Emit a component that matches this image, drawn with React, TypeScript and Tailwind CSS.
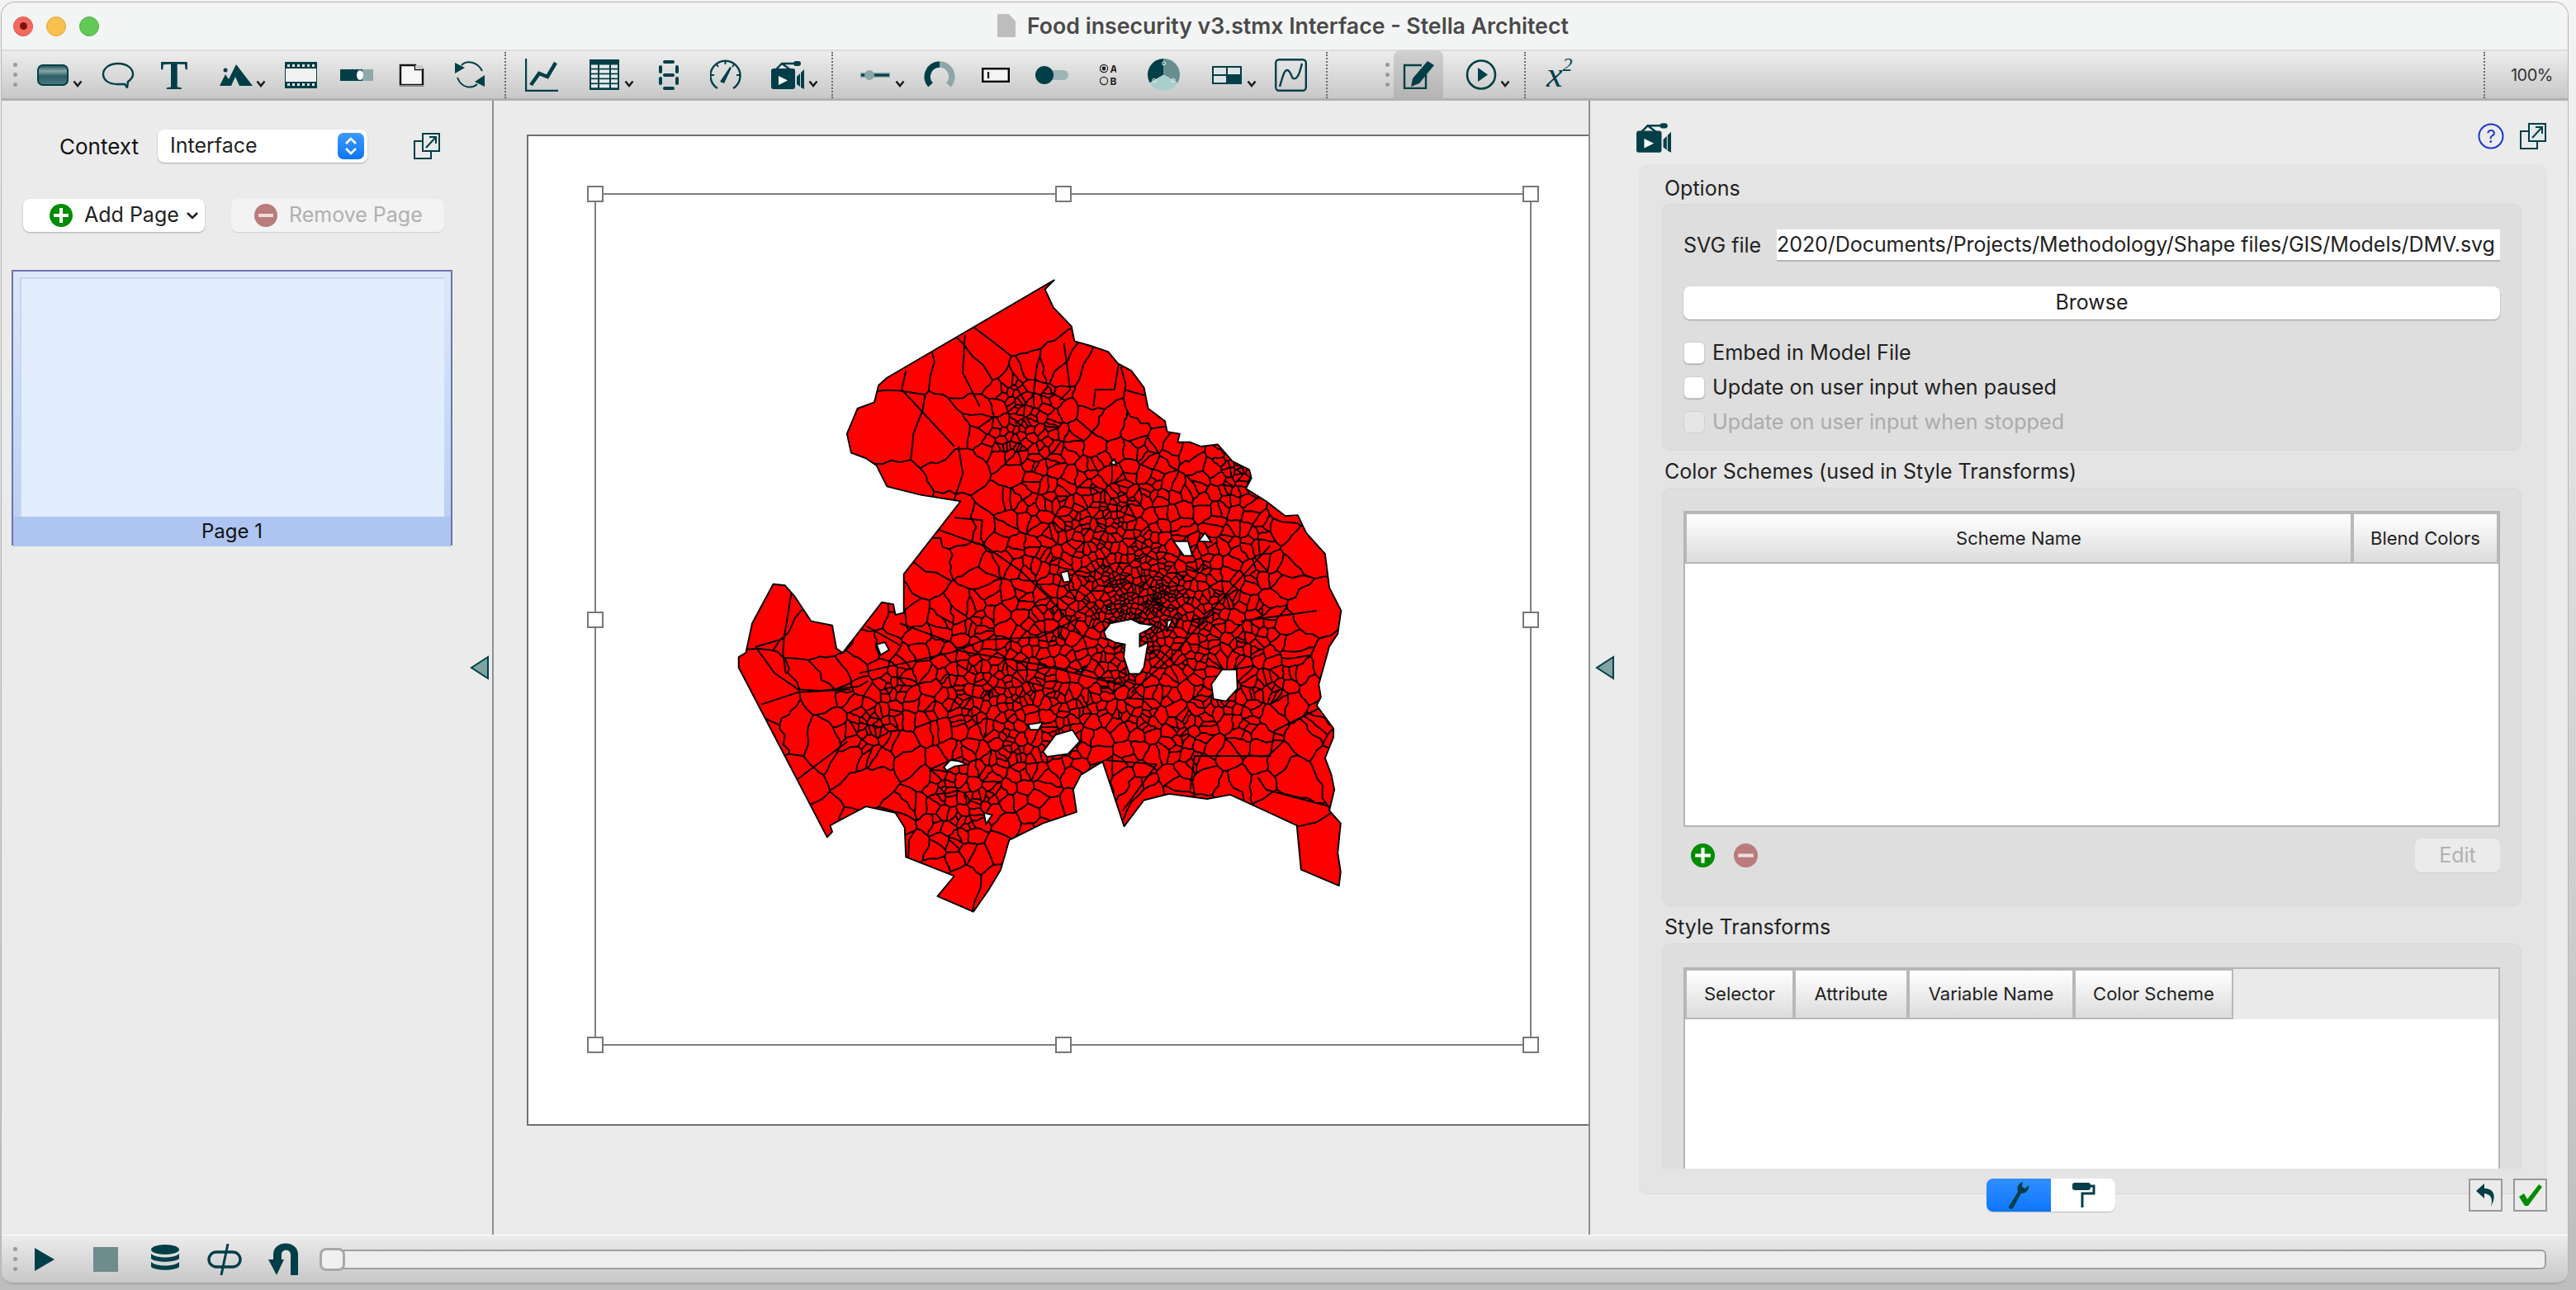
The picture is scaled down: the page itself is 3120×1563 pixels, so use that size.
import React from "react";

const TEAL = "#003f47";

// ---- map data: outline traced from the svg, inner tracts generated as a voronoi net
const OUTLINE = "817,40 795,62 815,105 858,150 865,185 900,195 945,210 968,238 1000,255 1030,295 1040,345 1080,375 1085,400 1115,405 1110,425 1140,425 1165,435 1205,430 1240,470 1280,490 1285,510 1272,535 1320,565 1365,600 1395,598 1415,640 1460,690 1470,770 1498,825 1490,880 1470,910 1445,1000 1450,1030 1440,1050 1480,1105 1480,1125 1460,1175 1475,1215 1482,1250 1470,1300 1497,1330 1490,1400 1497,1445 1493,1478 1403,1440 1393,1335 1235,1262 1180,1272 1090,1260 1030,1275 983,1337 932,1183 880,1215 862,1250 870,1303 790,1330 710,1370 690,1440 660,1490 625,1540 540,1503 580,1455 465,1410 462,1340 440,1305 370,1290 285,1335 290,1350 278,1363 68,960 68,935 85,925 100,855 150,762 178,765 200,790 240,850 290,860 300,915 315,925 408,805 435,810 440,835 460,830 460,738 595,565 500,550 420,530 395,480 370,463 335,450 325,405 350,345 390,330 400,290 420,272";

const HOLES = [
  "935,875 950,855 1000,845 1020,855 1055,860 1040,870 1020,880 1020,910 1040,900 1030,960 1020,975 995,975 982,935 985,905 960,900 940,890",
  "1190,1000 1215,965 1250,965 1252,1010 1225,1040 1195,1035",
  "790,1160 820,1120 860,1108 878,1135 850,1165 800,1172",
  "1100,660 1135,660 1145,695 1125,695",
  "1160,660 1175,640 1190,662",
  "832,735 850,730 855,755 840,758",
  "755,1095 790,1090 780,1108 760,1108",
  "555,1197 570,1180 590,1182 610,1190 580,1195 562,1205",
  "395,905 415,900 425,918 405,930",
  "650,1305 670,1310 655,1332",
  "1085,850 1098,845 1085,875",
  "950,475 960,465 965,480",
  "870,970 892,955 880,970",
  "925,1005 945,1005 935,1010",
  "940,820 950,815 950,825",
];

const LONG_LINES = [
  "M193 783 L176 888 L173 927 L180 975",
  "M108 911 L176 891",
  "M108 911 L153 973 L209 1012 L261 1015 L353 1005 L375 992",
  "M121 1048 L209 1019 L333 1012",
  "M209 1224 L326 1136",
  "M356 973 L575 924 L653 894 L783 888 L880 840",
  "M451 855 L575 901 L588 920 L783 953 L990 1005",
  "M372 862 L451 907",
  "M542 633 L653 672 L738 731 L800 790 L880 880",
  "M581 604 L646 610 L643 653 L653 672",
  "M1000 1020 L1100 930 L1230 780 L1330 670",
  "M1260 850 L1440 825",
  "M465 255 L455 300 L520 370 L580 435",
  "M605 170 L600 260 L640 340",
  "M970 240 L960 300 L915 300 L910 340",
  "M840 190 L855 300 L830 325",
  "M590 435 L600 500 L580 560",
  "M1460 1050 L1340 1110 L1330 1170 L1150 1170 L1140 1250",
  "M1300 1220 L1320 1250 L1470 1290",
  "M940 1180 L1060 1190 L980 1300",
];

function buildTracts() {
  let s = 20931;
  const rnd = () => {
    s = (s + 0x6d2b79f5) | 0;
    let t = Math.imul(s ^ (s >>> 15), 1 | s);
    t = (t + Math.imul(t ^ (t >>> 7), 61 | t)) ^ t;
    return ((t ^ (t >>> 14)) >>> 0) / 4294967296;
  };
  const gauss = () => Math.sqrt(-2 * Math.log(rnd() + 1e-9)) * Math.cos(6.2832 * rnd());
  const clusters: number[][] = [
    [190, 1015, 810, 55], [280, 1050, 800, 150], [210, 850, 950, 140], [110, 1150, 830, 120],
    [90, 760, 370, 60], [120, 640, 1010, 90], [70, 590, 1290, 60], [70, 400, 1060, 60],
    [25, 1235, 500, 25], [130, 950, 580, 110], [70, 1300, 1010, 90], [70, 1100, 1100, 90],
    [50, 740, 1180, 70], [60, 780, 640, 90],
  ];
  const seeds: number[][] = [];
  clusters.forEach(([n, x, y, r]) => {
    for (let i = 0; i < n; i++) seeds.push([x + gauss() * r, y + gauss() * r]);
  });
  for (let i = 0; i < 70; i++) seeds.push([60 + rnd() * 1440, 40 + rnd() * 1500]);

  const seen = new Set<string>();
  let d = "";
  seeds.forEach((p, idx) => {
    let poly = [[0, 0], [1568, 0], [1568, 1568], [0, 1568]];
    const others = seeds
      .filter((_, j) => j !== idx)
      .map((q) => ({ q, dist: Math.hypot(q[0] - p[0], q[1] - p[1]) }))
      .sort((a, b) => a.dist - b.dist);
    for (const { q, dist } of others) {
      const far = Math.max(...poly.map((v) => Math.hypot(v[0] - p[0], v[1] - p[1])));
      if (dist / 2 > far) break;
      const mx = (p[0] + q[0]) / 2, my = (p[1] + q[1]) / 2;
      const nx = q[0] - p[0], ny = q[1] - p[1];
      const next: number[][] = [];
      poly.forEach((a, i) => {
        const b = poly[(i + 1) % poly.length];
        const da = (a[0] - mx) * nx + (a[1] - my) * ny;
        const db = (b[0] - mx) * nx + (b[1] - my) * ny;
        if (da <= 0) next.push(a);
        if (da < 0 !== db < 0) {
          const t = da / (da - db);
          next.push([a[0] + (b[0] - a[0]) * t, a[1] + (b[1] - a[1]) * t]);
        }
      });
      poly = next;
    }
    poly.forEach((a, i) => {
      const b = poly[(i + 1) % poly.length];
      const ka = `${Math.round(a[0])},${Math.round(a[1])}`;
      const kb = `${Math.round(b[0])},${Math.round(b[1])}`;
      if (ka === kb) return;
      const key = ka < kb ? ka + "|" + kb : kb + "|" + ka;
      if (seen.has(key)) return;
      seen.add(key);
      const len = Math.hypot(b[0] - a[0], b[1] - a[1]);
      d += `M${a[0].toFixed(1)} ${a[1].toFixed(1)}`;
      const steps = len > 60 ? 5 : len > 16 ? 3 : 1;
      for (let k = 1; k < steps; k++) {
        const j = Math.min(len * 0.16, 16);
        const x = a[0] + ((b[0] - a[0]) * k) / steps + (rnd() - 0.5) * j;
        const y = a[1] + ((b[1] - a[1]) * k) / steps + (rnd() - 0.5) * j;
        d += `L${x.toFixed(1)} ${y.toFixed(1)}`;
      }
      d += `L${b[0].toFixed(1)} ${b[1].toFixed(1)}`;
    });
  });
  return d;
}

const TRACTS = buildTracts();

function DmvMap() {
  return (
    <svg viewBox="0 0 1568 1568" className="w-[800px] h-[800px] block ml-[138px] mt-[83px]">
      <defs>
        <clipPath id="dmv"><polygon points={OUTLINE} /></clipPath>
      </defs>
      <polygon points={OUTLINE} fill="#ff0000" />
      <g clipPath="url(#dmv)" fill="none" stroke="#000" strokeWidth="3.8" strokeLinejoin="round">
        <path d={TRACTS} />
        {LONG_LINES.map((l) => <path key={l} d={l} />)}
      </g>
      {HOLES.map((h) => <polygon key={h} points={h} fill="#fff" stroke="#000" strokeWidth="3.8" />)}
      <polygon points={OUTLINE} fill="none" stroke="#000" strokeWidth="3.8" strokeLinejoin="round" />
    </svg>
  );
}

// ---- small toolbar bits
const Sep = ({ className = "" }: { className?: string }) => (
  <div className={`h-[56px] border-l-2 border-dotted border-[#6a6a6a] w-[2px] ${className}`} />
);

const Grip = ({ className = "" }: { className?: string }) => (
  <div className={`flex flex-col gap-[7px] w-[5px] ${className}`}>
    <div className="w-[5px] h-[5px] rounded-full bg-[#9a9a9a]" />
    <div className="w-[5px] h-[5px] rounded-full bg-[#9a9a9a]" />
    <div className="w-[5px] h-[5px] rounded-full bg-[#9a9a9a]" />
  </div>
);

const Chev = ({ className = "" }: { className?: string }) => (
  <svg width="12" height="9" viewBox="0 0 12 9" className={`translate-y-[11px] shrink-0 ${className}`}>
    <path d="M1.5 1.5 L6 7 L10.5 1.5" fill="none" stroke="#1a1a1a" strokeWidth="2.4" />
  </svg>
);

const Popout = ({ className = "" }: { className?: string }) => (
  <svg width="32" height="32" viewBox="0 0 32 32" className={className}>
    <path d="M11 10 H1 V31 H21 V22" fill="none" stroke={TEAL} strokeWidth="2" />
    <rect x="11" y="1" width="20" height="21" fill="#e4eaea" stroke={TEAL} strokeWidth="2" />
    <path d="M15 18 L27 5 M19 5 H27 V13" fill="none" stroke={TEAL} strokeWidth="2" />
  </svg>
);

const PlusIcon = ({ size, className = "" }: { size: number; className?: string }) => (
  <svg width={size} height={size} viewBox="0 0 28 28" className={className}>
    <circle cx="14" cy="14" r="14" fill="#008c00" />
    <path d="M14 5 V23 M5 14 H23" stroke="#fff" strokeWidth="4" />
  </svg>
);

const MinusIcon = ({ size, className = "" }: { size: number; className?: string }) => (
  <svg width={size} height={size} viewBox="0 0 28 28" className={className}>
    <circle cx="14" cy="14" r="14" fill="#b97b7b" />
    <path d="M5 14 H23" stroke="#f1dddd" strokeWidth="4" />
  </svg>
);

const Camera = ({ className = "", w = 40, h = 34 }: { className?: string; w?: number; h?: number }) => (
  <svg width={w} height={h} viewBox="0 0 40 34" className={className}>
    <rect x="27" y="0" width="9" height="6" rx="3" fill={TEAL} />
    <path d="M6 10 L13 3 H28 M13 3 L24 11" fill="none" stroke={TEAL} strokeWidth="2.4" />
    <rect x="0" y="9" width="29" height="25" rx="3" fill={TEAL} />
    <path d="M9 18 L20 23.5 L9 29 Z" fill="#fff" />
    <path d="M31 19 L35 15 V31 L31 28 Z M36 14 L40 10 V34 L36 32 Z" fill={TEAL} />
  </svg>
);

const Handle = ({ className }: { className: string }) => (
  <div className={`absolute w-[20px] h-[20px] bg-white border-2 border-[#777] ${className}`} />
);

const CollapseArrow = ({ className }: { className: string }) => (
  <svg width="24" height="30" viewBox="0 0 24 30" className={`absolute ${className}`}>
    <path d="M22 2 V28 L2 15 Z" fill="#7fa3a3" stroke={TEAL} strokeWidth="2" />
  </svg>
);

const Checkbox = ({ label, disabled }: { label: string; disabled?: boolean }) => (
  <div className="flex items-center h-[27px]">
    <div className={`w-[26px] h-[27px] rounded-[6px] border border-[#cfcfcf] ${disabled ? "bg-[#e6e6e6]" : "bg-white shadow-[0_1px_1px_#aaa]"}`} />
    <span className={`ml-[9px] text-[25.2px] ${disabled ? "text-[#ababab]" : "text-[#222]"}`}>{label}</span>
  </div>
);

const HeaderCell = ({ label, className }: { label: string; className: string }) => (
  <div className={`flex items-center justify-center shrink-0 h-full bg-linear-to-b from-white to-[#dcdcdc] border-2 border-[#b8b8b8] text-[22px] text-[#222] ${className}`}>
    {label}
  </div>
);

function TopToolbar() {
  return (
    <div className="h-[62px] flex items-center shrink-0 bg-linear-to-b from-[#ededed] to-[#c8c8c8] border-t-2 border-t-[#dcdcdc] border-b-[3px] border-b-[#b0b0b0] relative">
      <Grip className="ml-[14px]" />
      <svg width="38" height="26" viewBox="0 0 38 26" className="ml-[24px]">
        <defs>
          <linearGradient id="btn" x1="0" y1="0" x2="0" y2="1">
            <stop offset="0" stopColor="#1c4f57" />
            <stop offset="0.3" stopColor="#8aa6a9" />
            <stop offset="0.55" stopColor="#2c5f66" />
            <stop offset="1" stopColor="#4d7a80" />
          </linearGradient>
        </defs>
        <rect x="1" y="1" width="36" height="24" rx="6" fill="url(#btn)" stroke={TEAL} strokeWidth="2" />
      </svg>
      <Chev className="ml-[5px]" />
      <svg width="40" height="32" viewBox="0 0 40 32" className="ml-[23px]">
        <path d="M20 2 C9 2 2 8 2 15 C2 22 9 27 19 27 L28 27 L31 31 L32 24 C36 21 38 18 38 15 C38 8 31 2 20 2 Z" fill="none" stroke={TEAL} strokeWidth="2.4" />
      </svg>
      <span className="ml-[29px] w-[38px] text-center font-['Liberation_Serif'] font-bold text-[50px] leading-none text-[#003f47]">T</span>
      <svg width="40" height="26" viewBox="0 0 40 26" className="ml-[36px]">
        <circle cx="7" cy="7" r="2.5" fill={TEAL} />
        <path d="M0 26 L7 12 L11 18 L20 0 L40 26 L24 26 L19 15 L14 26 Z" fill={TEAL} />
      </svg>
      <Chev className="ml-[4px]" />
      <svg width="39" height="32" viewBox="0 0 39 32" className="ml-[23px]">
        <rect width="39" height="32" fill={TEAL} />
        <rect x="1" y="8" width="37" height="16" fill="#f2f2f2" />
        {[3, 9, 15, 21, 27, 33].map((x) => (
          <g key={x} fill="#e8e8e8">
            <rect x={x} y="3" width="3" height="3" />
            <rect x={x} y="26" width="3" height="3" />
          </g>
        ))}
      </svg>
      <svg width="40" height="14" viewBox="0 0 40 14" className="ml-[28px]">
        <rect width="40" height="14" fill="#8fa9ab" />
        <rect width="27" height="14" fill={TEAL} />
        <ellipse cx="24" cy="7" rx="4" ry="6" fill="#fff" />
      </svg>
      <svg width="31" height="28" viewBox="0 0 31 28" className="ml-[31px]">
        <path d="M2 26 V2 H20 V7 H29 V26 Z" fill="#f6f6f6" stroke="#111" strokeWidth="2.4" />
        <rect x="20" y="2" width="9" height="5" fill="#c8c8c8" />
        <rect x="1" y="26" width="29" height="2" fill="#8a8a8a" />
      </svg>
      <svg width="36" height="33" viewBox="0 0 36 33" className="ml-[37px]">
        <path d="M8 5 C14 -1 27 0 33 12 M3 20 C8 33 20 34 27 28" fill="none" stroke={TEAL} strokeWidth="2" />
        <path d="M0 2 L0 15 L12 8 Z M36 17 L36 31 L24 25 Z" fill={TEAL} />
      </svg>
      <Sep className="ml-[24px]" />
      <svg width="40" height="40" viewBox="0 0 40 40" className="ml-[23px]">
        <path d="M1 0 V39 H40" fill="none" stroke={TEAL} strokeWidth="2.4" />
        <path d="M7 32 L17 18 L27 22 L37 5" fill="none" stroke={TEAL} strokeWidth="4.5" />
      </svg>
      <svg width="36" height="37" viewBox="0 0 36 37" className="ml-[38px]">
        <rect width="36" height="37" fill={TEAL} />
        {[0, 1, 2, 3, 4].map((r) =>
          [[2, 8], [12, 12], [26, 8]].map(([x, w]) => <rect key={`${r}-${x}`} x={x} y={6.5 + r * 5.9} width={w} height="4.2" fill="#e6eaea" />)
        )}
      </svg>
      <Chev className="ml-[6px]" />
      <svg width="24" height="36" viewBox="0 0 24 36" className="ml-[30px]">
        <g fill={TEAL}>
          <rect x="5" y="0" width="14" height="4" rx="2" />
          <rect x="0" y="6" width="4" height="10" rx="2" />
          <rect x="20" y="6" width="4" height="10" rx="2" />
          <rect x="5" y="16" width="14" height="4" rx="2" />
          <rect x="0" y="20" width="4" height="10" rx="2" />
          <rect x="20" y="20" width="4" height="10" rx="2" />
          <rect x="5" y="32" width="14" height="4" rx="2" />
        </g>
      </svg>
      <svg width="38" height="37" viewBox="0 0 38 37" className="ml-[38px]">
        <path d="M9 35 A18 18 0 1 1 28 35" fill="none" stroke={TEAL} strokeWidth="2.4" />
        <path d="M12 27 L24 9 L26 10 L17 29 Z" fill={TEAL} />
        <path d="M18.500 1 V6 M8 6 L10 9 M29 6 L27 9 M1 19 H5 M32 19 H36" stroke={TEAL} strokeWidth="2" />
      </svg>
      <Camera className="ml-[36px]" />
      <Chev className="ml-[5px]" />
      <Sep className="ml-[16px]" />
      <svg width="36" height="14" viewBox="0 0 36 14" className="ml-[33px]">
        <rect x="0" y="4" width="36" height="6" fill="#8aa7a9" />
        <rect x="1" y="5.500" width="34" height="3" fill={TEAL} />
        <circle cx="11" cy="7" r="6" fill="#8aa7a9" />
      </svg>
      <Chev className="ml-[6px]" />
      <svg width="38" height="33" viewBox="0 0 38 33" className="ml-[23px]">
        <path d="M8 29 A15 15 0 0 1 19 4" fill="none" stroke={TEAL} strokeWidth="7.5" />
        <path d="M19 4 A15 15 0 0 1 30 29" fill="none" stroke="#8da6a8" strokeWidth="7.5" />
      </svg>
      <svg width="34" height="18" viewBox="0 0 34 18" className="ml-[32px]">
        <rect x="1.200" y="1.200" width="31.600" height="15.600" fill="#f4f4f4" stroke="#000" strokeWidth="2.4" />
        <path d="M8 5 V13" stroke="#222" strokeWidth="2.4" />
      </svg>
      <svg width="40" height="22" viewBox="0 0 40 22" className="ml-[31px]">
        <rect x="14" y="5" width="26" height="12" rx="6" fill="#9fb4b7" />
        <circle cx="11" cy="11" r="11" fill={TEAL} />
      </svg>
      <svg width="20" height="27" viewBox="0 0 20 27" className="ml-[38px]">
        <circle cx="5" cy="6" r="4.600" fill="none" stroke="#222" strokeWidth="1.2" />
        <circle cx="5" cy="6" r="2.400" fill="#222" />
        <circle cx="5" cy="21" r="4.600" fill="none" stroke="#222" strokeWidth="1.2" />
        <text x="12.500" y="10.500" fontSize="12" fontWeight="700" fontFamily="Inter" fill="#222">A</text>
        <text x="12.500" y="25.500" fontSize="12" fontWeight="700" fontFamily="Inter" fill="#222">B</text>
      </svg>
      <svg width="39" height="39" viewBox="0 0 40 40" className="ml-[38px]">
        <path d="M20 20 V0 A20 20 0 0 0 2.700 30 Z" fill={TEAL} />
        <path d="M20 20 V0 A20 20 0 0 1 37.300 30 Z" fill="#668e8e" />
        <path d="M20 20 L2.700 30 A20 20 0 0 0 37.300 30 Z" fill="#a8cfcd" />
        <circle cx="20" cy="6" r="2" fill="none" stroke="#fff" />
        <circle cx="8" cy="27" r="2" fill="none" stroke="#fff" />
        <circle cx="32" cy="27" r="2" fill="none" stroke="#fff" />
      </svg>
      <svg width="36" height="22" viewBox="0 0 36 22" className="ml-[39px]">
        <rect width="36" height="22" fill={TEAL} />
        <rect x="2" y="2" width="15" height="8" fill="#dfe3e3" />
        <rect x="19" y="2" width="15" height="8" fill="#dfe3e3" />
        <rect x="2" y="12" width="15" height="8" fill="#dfe3e3" />
      </svg>
      <Chev className="ml-[6px]" />
      <svg width="39" height="40" viewBox="0 0 39 40" className="ml-[22px]">
        <rect x="1.200" y="1.200" width="36.600" height="37.600" rx="4" fill="none" stroke={TEAL} strokeWidth="2.4" />
        <path d="M6 34 C10 20 12 11 17 15 C21 19 20 26 25 24 C30 22 31 12 33 6" fill="none" stroke={TEAL} strokeWidth="2.4" />
      </svg>
      <Sep className="ml-[23px]" />
      <Grip className="ml-[70px]" />
      <div className="ml-[5px] w-[60px] h-[59px] bg-linear-to-b from-[#d0d0d0] to-[#b4b4b4] rounded-t-[8px] flex items-center justify-center">
        <svg width="38" height="34" viewBox="0 0 38 34">
          <path d="M23 5 H2 V33 H28 V14" fill="none" stroke={TEAL} strokeWidth="2.4" />
          <path d="M30 0 L38 5 L20 27 L10 31 L12 21 Z" fill={TEAL} />
        </svg>
      </div>
      <svg width="38" height="37" viewBox="0 0 38 37" className="ml-[27px]">
        <circle cx="19" cy="18.500" r="17" fill="none" stroke={TEAL} strokeWidth="2.6" />
        <path d="M15 10 L27 18.500 L15 27 Z" fill={TEAL} />
      </svg>
      <Chev className="ml-[4px]" />
      <Sep className="ml-[17px]" />
      <span className="ml-[25px] w-[38px] flex items-start font-['Liberation_Serif'] italic text-[#003f47] text-[44px] leading-none">
        x<span className="text-[24px] leading-none -mt-[3px]">2</span>
      </span>
      <Sep className="ml-auto" />
      <span className="ml-[31px] mr-[18px] text-[20px] text-[#333] tracking-[-0.5px]">100%</span>
    </div>
  );
}

function LeftPanel() {
  return (
    <div className="w-[596px] shrink-0 relative border-r-2 border-[#8f8f8f] bg-[#ebebeb]">
      <div className="flex items-center mt-[35px] h-[40px]">
        <span className="ml-[70px] text-[26px] text-[#111]">Context</span>
        <div className="ml-[23px] w-[254px] h-[40px] rounded-[8px] bg-white shadow-[0_1px_2px_#a8a8a8] flex items-center pl-[15px] pr-[4px] justify-between text-[25px] text-[#222]">
          Interface
          <div className="w-[32px] h-[32px] rounded-[7px] bg-linear-to-b from-[#3d9bff] to-[#0a74f5] flex items-center justify-center">
            <svg width="16" height="24" viewBox="0 0 16 24">
              <path d="M2 9 L8 3 L14 9 M2 15 L8 21 L14 15" fill="none" stroke="#fff" strokeWidth="2.6" />
            </svg>
          </div>
        </div>
        <Popout className="ml-[56px]" />
      </div>
      <div className="flex mt-[44px] ml-[26px]">
        <div className="w-[220px] h-[40px] rounded-[8px] bg-white shadow-[0_1px_2px_#a8a8a8] flex items-center pl-[32px] text-[25px] text-[#222]">
          <PlusIcon size={28} />
          <span className="ml-[14px]">Add Page</span>
          <svg width="16" height="10" viewBox="0 0 16 10" className="ml-[8px]">
            <path d="M2 2 L8 8 L14 2" fill="none" stroke="#222" strokeWidth="2.6" />
          </svg>
        </div>
        <div className="ml-[32px] w-[258px] h-[40px] rounded-[8px] bg-[#f3f3f3] shadow-[0_1px_1px_#cfcfcf] flex items-center pl-[28px] text-[25px] text-[#b0b0b0]">
          <MinusIcon size={28} />
          <span className="ml-[14px]">Remove Page</span>
        </div>
      </div>
      <div className="ml-[12px] mt-[46px] w-[534px] h-[334px] border-2 border-[#6b74ad] bg-linear-to-b from-[#dce8fb] to-[#b8cdf3] flex flex-col items-center">
        <div className="mt-[7px] w-[514px] h-[290px] bg-[#e2edfd] border-t-2 border-l-2 border-[#c9d6ea] shrink-0" />
        <div className="w-full flex-1 bg-[#aec5f1] flex items-center justify-center text-[24px] text-[#111]">Page 1</div>
      </div>
      <CollapseArrow className="left-[567px] top-[672px]" />
    </div>
  );
}

function Canvas() {
  return (
    <div className="w-[1328px] shrink-0 relative overflow-hidden border-r-2 border-[#8f8f8f] bg-[#ebebeb]">
      <div className="ml-[40px] mt-[41px] w-[1340px] h-[1201px] bg-white border-2 border-[#707070]">
        <div className="ml-[80px] mt-[69px] w-[1135px] h-[1033px] relative border-2 border-[#808080]">
          <DmvMap />
          <Handle className="-left-[11px] -top-[11px]" />
          <Handle className="left-[556px] -top-[11px]" />
          <Handle className="-right-[11px] -top-[11px]" />
          <Handle className="-left-[11px] top-[505px]" />
          <Handle className="-right-[11px] top-[505px]" />
          <Handle className="-left-[11px] -bottom-[11px]" />
          <Handle className="left-[556px] -bottom-[11px]" />
          <Handle className="-right-[11px] -bottom-[11px]" />
        </div>
      </div>
    </div>
  );
}

function RightPanel() {
  return (
    <div className="flex-1 relative bg-[#ebebeb]">
      <CollapseArrow className="left-[6px] top-[672px]" />
      <div className="h-[77px] flex pt-[27px] pl-[56px] pr-[26px]">
        <Camera w={42} h={36} />
        <svg width="32" height="32" viewBox="0 0 32 32" className="ml-auto">
          <circle cx="16" cy="16" r="14.500" fill="none" stroke="#1a35d0" strokeWidth="2" />
          <text x="16" y="24" textAnchor="middle" fontSize="22" fontFamily="Inter" fill="#1a35d0">?</text>
        </svg>
        <Popout className="ml-[19px]" />
      </div>
      <div className="ml-[59px] w-[1100px] h-[1248px] rounded-[10px] bg-[#e4e4e4] border-b border-[#d8d8d8] pl-[28px] pr-[31px] pb-[30px] flex flex-col">
        <div className="flex-1 overflow-hidden">
          <div className="h-[48px] pl-[3px] pt-[14px] text-[25px] leading-[30px] text-[#222]">Options</div>
          <div className="h-[299px] rounded-[10px] bg-[#dedede] border border-[#d8d8d8] pt-[30px] pl-[25px] pr-[25px]">
            <div className="flex items-center h-[39px]">
              <span className="text-[25px] text-[#222]">SVG file</span>
              <div className="ml-auto w-[876px] h-[39px] bg-white border-b-2 border-[#b5b5b5] flex items-center text-[25px] tracking-[-0.06px] text-[#222] whitespace-nowrap overflow-hidden">
                2020/Documents/Projects/Methodology/Shape files/GIS/Models/DMV.svg
              </div>
            </div>
            <div className="mt-[30px] h-[40px] rounded-[8px] bg-white shadow-[0_1px_2px_#999] flex items-center justify-center text-[25px] text-[#222]">Browse</div>
            <div className="mt-[27px] flex flex-col gap-[15px]">
              <Checkbox label="Embed in Model File" />
              <Checkbox label="Update on user input when paused" />
              <Checkbox label="Update on user input when stopped" disabled />
            </div>
          </div>
          <div className="h-[45px] pl-[3px] pt-[10px] text-[25px] leading-[30px] text-[#222]">Color Schemes (used in Style Transforms)</div>
          <div className="h-[507px] rounded-[10px] bg-[#dedede] border border-[#d8d8d8] pt-[27px] pl-[25px] pr-[25px]">
            <div className="h-[383px] bg-white border-2 border-[#b5b5b5] flex flex-col">
              <div className="h-[62px] flex shrink-0">
                <HeaderCell label="Scheme Name" className="w-[808px]" />
                <HeaderCell label="Blend Colors" className="flex-1" />
              </div>
            </div>
            <div className="flex items-center mt-[14px] pl-[9px]">
              <PlusIcon size={29} />
              <MinusIcon size={29} className="ml-[23px]" />
              <div className="ml-auto w-[103px] h-[41px] rounded-[8px] bg-[#ebebeb] shadow-[0_1px_1px_#cfcfcf] flex items-center justify-center text-[25px] text-[#b0b0b0]">Edit</div>
            </div>
          </div>
          <div className="h-[45px] pl-[3px] pt-[10px] text-[25px] leading-[30px] text-[#222]">Style Transforms</div>
          <div className="h-[400px] rounded-[10px] bg-[#dedede] border border-[#d8d8d8] pt-[28px] pl-[25px] pr-[25px]">
            <div className="h-[400px] bg-white border-2 border-b-0 border-[#b5b5b5]">
              <div className="h-[61px] flex bg-[#eaeaea]">
                <HeaderCell label="Selector" className="w-[132px]" />
                <HeaderCell label="Attribute" className="w-[138px]" />
                <HeaderCell label="Variable Name" className="w-[201px]" />
                <HeaderCell label="Color Scheme" className="w-[193px]" />
              </div>
            </div>
          </div>
        </div>
      </div>
      <div className="relative -mt-[19px] h-[40px] flex items-center">
        <div className="ml-[480px] w-[156px] h-[40px] rounded-[8px] overflow-hidden flex bg-white shadow-[0_1px_1px_#bbb]">
          <div className="w-[78px] h-full bg-linear-to-b from-[#2f8fff] to-[#0a76ff] flex items-center justify-center">
            <svg width="30" height="34" viewBox="0 0 30 34">
              <path d="M3 31 L14 13 C12 7 15 3 20 1 L19 7 L23 9 L27 5 C28 11 24 15 18 15 L8 33 C6 35 2 33 3 31 Z" fill={TEAL} />
            </svg>
          </div>
          <div className="flex-1 flex items-center justify-center">
            <svg width="30" height="32" viewBox="0 0 30 32">
              <rect x="2" y="1" width="22" height="9" rx="3" fill={TEAL} />
              <path d="M24 5 H28 V14 H14 V31" fill="none" stroke={TEAL} strokeWidth="3" />
            </svg>
          </div>
        </div>
        <div className="ml-[428px] w-[41px] h-[40px] border-2 border-[#9a9a9a] bg-[#ebebeb] flex items-center justify-center">
          <svg width="28" height="30" viewBox="0 0 28 30">
            <path d="M2 10 L12 1 V7 C22 7 28 14 20 29 C23 18 19 14 12 13 V19 Z" fill={TEAL} />
          </svg>
        </div>
        <div className="ml-[13px] w-[41px] h-[40px] border-2 border-[#9a9a9a] bg-[#ebebeb] flex items-center justify-center">
          <svg width="30" height="28" viewBox="0 0 30 28">
            <path d="M1 16 L7 12 L11 19 L25 1 L29 4 L12 27 L8 27 Z" fill="#008c00" />
          </svg>
        </div>
      </div>
    </div>
  );
}

function BottomToolbar() {
  return (
    <div className="h-[60px] shrink-0 flex items-center bg-linear-to-b from-[#ececec] to-[#c8c8c8] border-t border-t-white border-b-2 border-b-[#aaaaaa] rounded-b-[14px]">
      <Grip className="ml-[14px]" />
      <svg width="24" height="28" viewBox="0 0 24 28" className="ml-[21px]">
        <path d="M0 0 L24 14 L0 28 Z" fill={TEAL} />
      </svg>
      <div className="ml-[47px] w-[30px] h-[30px] bg-[#6e8b8e]" />
      <svg width="34" height="35" viewBox="0 0 34 35" className="ml-[40px]">
        <ellipse cx="17" cy="6" rx="17" ry="6" fill={TEAL} />
        <path d="M0 11 C6 17 28 17 34 11 V17 C28 22 6 22 0 17 Z" fill={TEAL} />
        <path d="M0 20 C6 26 28 26 34 20 V26 C28 31 6 31 0 26 Z" fill={TEAL} transform="translate(0 1)" />
      </svg>
      <svg width="42" height="38" viewBox="0 0 42 38" className="ml-[34px]">
        <rect x="2" y="10" width="38" height="18" rx="9" fill="none" stroke={TEAL} strokeWidth="3.4" />
        <path d="M25 0 L17 38" stroke={TEAL} strokeWidth="3" />
      </svg>
      <svg width="38" height="39" viewBox="0 0 38 39" className="ml-[31px]">
        <path d="M7 20 V14 C7 -4 37 -4 37 14 V39 H28 V14 C28 7 17 7 17 14 V20 H20 L11 39 L1 20 Z" fill={TEAL} />
      </svg>
      <div className="ml-[25px] flex-1 mr-[26px] h-[28px] flex items-center relative">
        <div className="absolute left-[14px] right-0 h-[24px] rounded-r-[6px] bg-[#eeeeee] border-2 border-[#a0a0a0]" />
        <div className="relative w-[31px] h-[28px] rounded-[8px] bg-[#f0f0f0] border-[3px] border-[#a8a8a8]" />
      </div>
    </div>
  );
}

export default function App() {
  return (
    <div className="w-[3120px] h-[1563px] overflow-hidden bg-linear-to-b from-[#f4f4f4] to-[#bdbdbd] pt-[3px] pl-[2px] font-['Inter','Liberation_Sans',sans-serif]">
      <div className="w-[3108px] h-[1553px] flex flex-col rounded-t-[16px] rounded-b-[14px] bg-[#ebebeb] shadow-[0_0_0_1px_#b4b4b4]">
        <div className="h-[57px] shrink-0 rounded-t-[16px] bg-[#f3f5f4] flex items-center relative">
          <div className="ml-[14px] w-[24px] h-[24px] rounded-full bg-[#f4695f] border border-[#d9534a] flex items-center justify-center">
            <div className="w-[9px] h-[9px] rounded-full bg-[#7a1410]" />
          </div>
          <div className="ml-[16px] w-[24px] h-[24px] rounded-full bg-[#f7c04f] border border-[#dca33c]" />
          <div className="ml-[16px] w-[24px] h-[24px] rounded-full bg-[#62c955] border border-[#4fae44]" />
          <div className="absolute left-[1206px] top-[8px] flex items-center">
            <svg width="22" height="28" viewBox="0 0 22 28">
              <path d="M0 1 Q0 0 1 0 H14 L22 9 V27 Q22 28 21 28 H1 Q0 28 0 27 Z" fill="#bdbdbd" />
            </svg>
            <span className="ml-[14px] text-[26.7px] font-semibold text-[#4a4a4a] whitespace-nowrap">Food insecurity v3.stmx Interface - Stella Architect</span>
          </div>
        </div>
        <TopToolbar />
        <div className="flex-1 flex min-h-0">
          <LeftPanel />
          <Canvas />
          <RightPanel />
        </div>
        <BottomToolbar />
      </div>
    </div>
  );
}
